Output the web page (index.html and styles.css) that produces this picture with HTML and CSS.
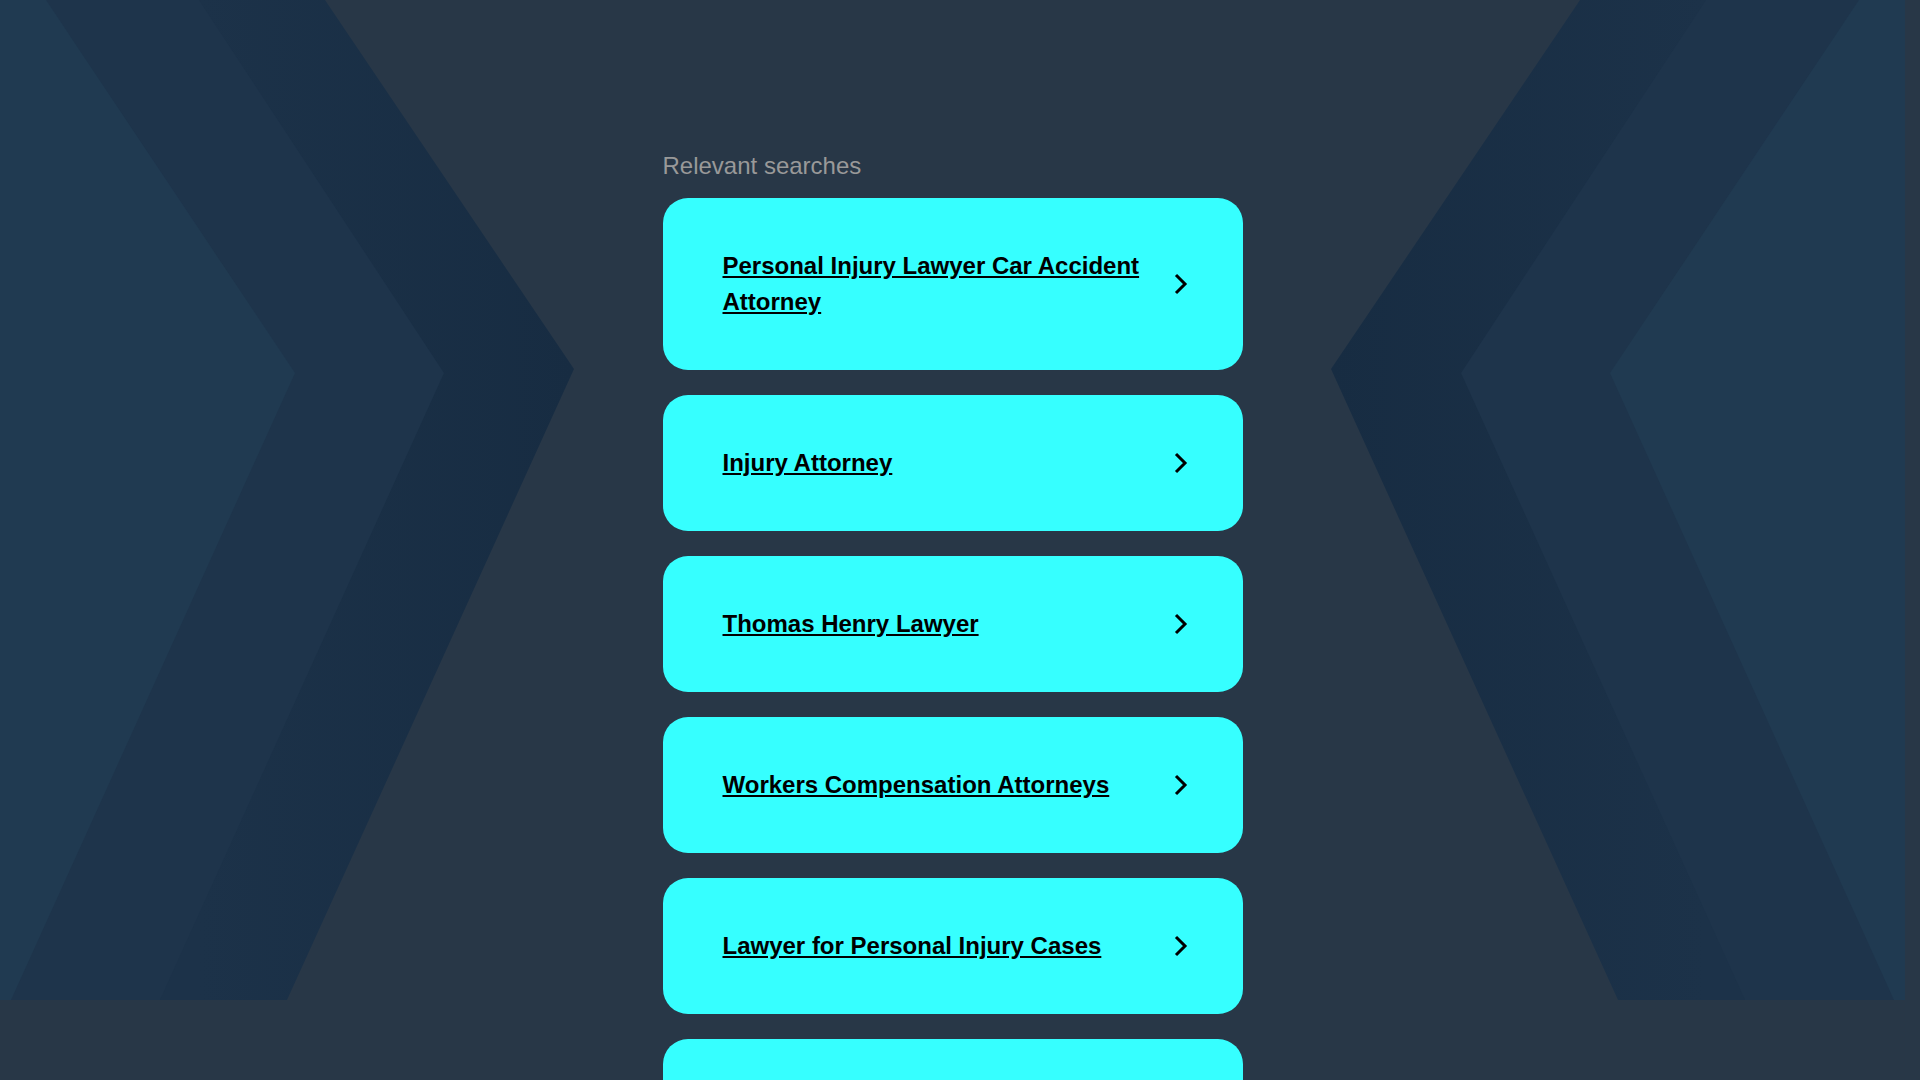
FILE: index.html
```html
<!DOCTYPE html>
<html lang="en">
<head>
<meta charset="utf-8">
<title>Relevant searches</title>
<link rel="stylesheet" href="styles.css">
</head>
<body>
<div class="page">
<svg class="bg" viewBox="0 0 1905 1000" preserveAspectRatio="none" aria-hidden="true">
  <defs>
    <linearGradient id="gl" gradientUnits="userSpaceOnUse" x1="200" y1="0" x2="574" y2="0">
      <stop offset="0" stop-color="#1c3249"/>
      <stop offset="1" stop-color="#172c42"/>
    </linearGradient>
    <linearGradient id="gr" gradientUnits="userSpaceOnUse" x1="1705" y1="0" x2="1331" y2="0">
      <stop offset="0" stop-color="#1c3249"/>
      <stop offset="1" stop-color="#172c42"/>
    </linearGradient>
  </defs>
  <polygon points="0,0 325,0 574,369 287,1000 0,1000" fill="url(#gl)"/>
  <polygon points="0,0 199,0 444,373 160,1000 0,1000" fill="#1e344b"/>
  <polygon points="0,0 46,0 295,373 11,1000 0,1000" fill="#203a51"/>
  <polygon points="1905,0 1580,0 1331,369 1618,1000 1905,1000" fill="url(#gr)"/>
  <polygon points="1905,0 1706,0 1461,373 1745,1000 1905,1000" fill="#1e344b"/>
  <polygon points="1905,0 1859,0 1610,373 1894,1000 1905,1000" fill="#203a51"/>
</svg>
<main class="container">
  <h2 class="title">Relevant searches</h2>
  <ul class="list">
    <li><a class="card" href="#"><span class="label">Personal Injury Lawyer Car Accident Attorney</span><svg class="arrow" viewBox="0 0 16 22" width="16" height="22"><path d="M3 2l9 9-9 9"/></svg></a></li>
    <li><a class="card" href="#"><span class="label">Injury Attorney</span><svg class="arrow" viewBox="0 0 16 22" width="16" height="22"><path d="M3 2l9 9-9 9"/></svg></a></li>
    <li><a class="card" href="#"><span class="label">Thomas Henry Lawyer</span><svg class="arrow" viewBox="0 0 16 22" width="16" height="22"><path d="M3 2l9 9-9 9"/></svg></a></li>
    <li><a class="card" href="#"><span class="label">Workers Compensation Attorneys</span><svg class="arrow" viewBox="0 0 16 22" width="16" height="22"><path d="M3 2l9 9-9 9"/></svg></a></li>
    <li><a class="card" href="#"><span class="label">Lawyer for Personal Injury Cases</span><svg class="arrow" viewBox="0 0 16 22" width="16" height="22"><path d="M3 2l9 9-9 9"/></svg></a></li>
    <li><a class="card" href="#"><span class="label">Car Accident Lawyer Near Me</span><svg class="arrow" viewBox="0 0 16 22" width="16" height="22"><path d="M3 2l9 9-9 9"/></svg></a></li>
  </ul>
</main>
</div>
</body>
</html>
```

FILE: styles.css
```css
html, body {
  margin: 0;
  padding: 0;
}

body {
  background: #283747;
  font-family: "Liberation Sans", Arial, sans-serif;
}

.page {
  position: relative;
  width: calc(100% - 15px);
}

.bg {
  position: absolute;
  top: 0;
  left: 0;
  width: 100%;
  height: 1000px;
  z-index: 0;
  display: block;
}

.container {
  position: relative;
  z-index: 1;
  width: 580px;
  margin: 0 auto;
  padding: 148px 0 60px;
}

.title {
  margin: 0 0 14px;
  font-size: 24px;
  line-height: 36px;
  font-weight: normal;
  color: #999999;
}

.list {
  list-style: none;
  margin: 0;
  padding: 0;
  display: flex;
  flex-direction: column;
  gap: 25px;
}

.card {
  display: flex;
  align-items: center;
  gap: 20px;
  padding: 50px 54px 50px 60px;
  background: #36ffff;
  border-radius: 25px;
  color: #000;
  text-decoration: none;
}

.label {
  flex: 1;
  font-size: 24px;
  line-height: 36px;
  font-weight: bold;
  text-decoration: underline;
  color: #000;
}

.arrow {
  flex: none;
  display: block;
}

.arrow path {
  fill: none;
  stroke: #000;
  stroke-width: 3;
}
```
